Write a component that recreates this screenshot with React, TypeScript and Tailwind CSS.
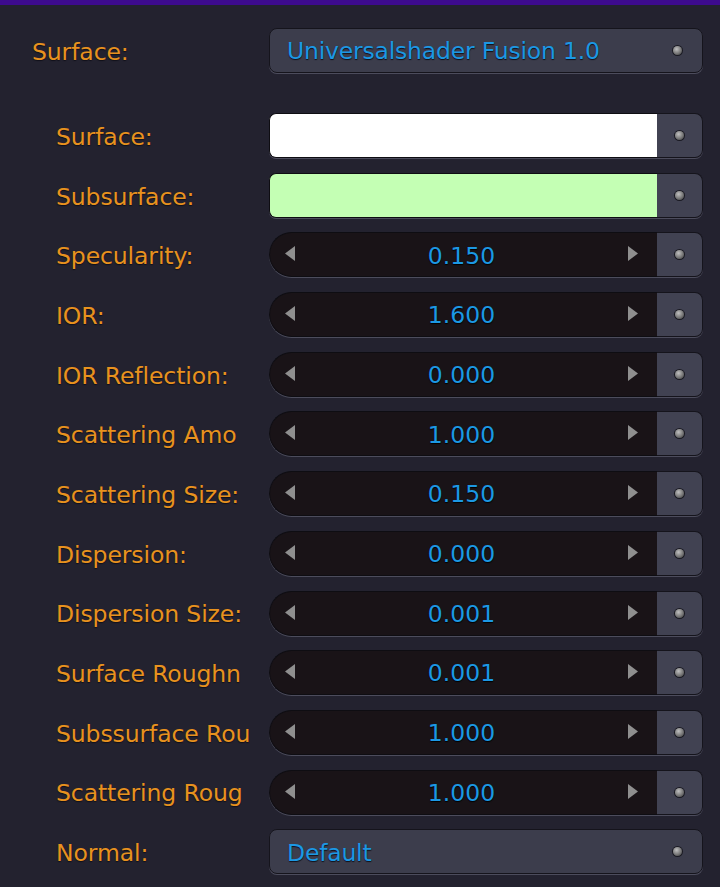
const FONT = "font-['DejaVu_Sans','Liberation_Sans',sans-serif]";

type Row =
  | { kind: "color"; label: string; color: string }
  | { kind: "number"; label: string; value: string }
  | { kind: "menu"; label: string; value: string };

const ROWS: Row[] = [
  { kind: "color", label: "Surface:", color: "bg-white" },
  { kind: "color", label: "Subsurface:", color: "bg-[#c4ffb4]" },
  { kind: "number", label: "Specularity:", value: "0.150" },
  { kind: "number", label: "IOR:", value: "1.600" },
  { kind: "number", label: "IOR Reflection:", value: "0.000" },
  { kind: "number", label: "Scattering Amo", value: "1.000" },
  { kind: "number", label: "Scattering Size:", value: "0.150" },
  { kind: "number", label: "Dispersion:", value: "0.000" },
  { kind: "number", label: "Dispersion Size:", value: "0.001" },
  { kind: "number", label: "Surface Roughn", value: "0.001" },
  { kind: "number", label: "Subssurface Rou", value: "1.000" },
  { kind: "number", label: "Scattering Roug", value: "1.000" },
  { kind: "menu", label: "Normal:", value: "Default" },
];

function Dot() {
  return (
    <span className="block w-[9px] h-[9px] rounded-full bg-[radial-gradient(circle_at_40%_35%,#c0c0c0,#707070_60%,#2a2a2a)] shadow-[0_0_0_1px_#1a1a22]" />
  );
}

function ResetButton() {
  return (
    <div className="w-[46px] h-full flex items-center justify-center bg-[#414252] rounded-r-[8px] border border-l-0 border-[#15141c] shadow-[0_1px_0_#4c4c5c]">
      <Dot />
    </div>
  );
}

function MenuField({ value }: { value: string }) {
  return (
    <div className="flex-1 h-[45px] flex items-center justify-between pl-[17px] pr-[20px] bg-[#3c3d4c] rounded-[8px] border border-[#15141c] shadow-[0_1px_0_#4c4c5c]">
      <span className="text-[23.5px] text-[#1c98e4] leading-none tracking-[-0.2px] pt-[3px] [text-shadow:0_1px_1px_#10101a]">{value}</span>
      <Dot />
    </div>
  );
}

function ColorField({ color }: { color: string }) {
  return (
    <div className="flex-1 h-[45px] flex">
      <div className={`flex-1 ${color} rounded-l-[7px] border border-r-0 border-[#0e0d12] shadow-[0_1px_0_#4c4c5c]`} />
      <ResetButton />
    </div>
  );
}

function NumberField({ value }: { value: string }) {
  return (
    <div className="flex-1 h-[45px] flex">
      <div className="flex-1 flex items-center justify-between pl-[15px] pr-[19px] bg-[#191317] rounded-l-full border border-r-0 border-[#0e0d12] shadow-[0_1px_0_#4c4c5c]">
        <svg width="10" height="15" viewBox="0 0 10 15" className="-mt-[2px]">
          <path d="M10 0 L0 7.5 L10 15 Z" fill="#8f8f8f" />
        </svg>
        <span className="text-[23.5px] text-[#1c98e4] leading-none pt-[3px] [text-shadow:0_1px_1px_#000]">{value}</span>
        <svg width="10" height="15" viewBox="0 0 10 15" className="-mt-[2px]">
          <path d="M0 0 L10 7.5 L0 15 Z" fill="#8f8f8f" />
        </svg>
      </div>
      <ResetButton />
    </div>
  );
}

function Label({ text, indent }: { text: string; indent?: boolean }) {
  return (
    <div
      className={`${indent ? "w-[213px] ml-[56px]" : "w-[237px] ml-[32px]"} overflow-hidden whitespace-nowrap text-[23.5px] text-[#e8921e] tracking-[-0.1px] pt-[4px] [text-shadow:0_1px_1px_#10101a]`}
    >
      {text}
    </div>
  );
}

export default function App() {
  return (
    <div className={`w-[720px] h-[887px] bg-[#23222f] ${FONT} overflow-hidden`}>
      <div className="h-[5px] bg-[#3d0b8e]" />
      <div className="pt-[23px] pr-[17px] flex flex-col">
        <div className="flex items-center">
          <Label text="Surface:" />
          <MenuField value="Universalshader Fusion 1.0" />
        </div>
        <div className="mt-[40px] flex flex-col gap-[14.7px]">
          {ROWS.map((row, i) => (
            <div key={i} className="flex items-center">
              <Label text={row.label} indent />
              {row.kind === "color" && <ColorField color={row.color} />}
              {row.kind === "number" && <NumberField value={row.value} />}
              {row.kind === "menu" && <MenuField value={row.value} />}
            </div>
          ))}
        </div>
      </div>
    </div>
  );
}
